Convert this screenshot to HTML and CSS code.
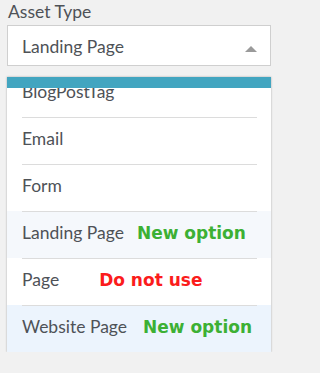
FILE: index.html
```html
<!DOCTYPE html>
<html>
<head>
<meta charset="utf-8">
<link rel="stylesheet" href="styles.css">
</head>
<body>
<div class="field">
  <div class="label">Asset Type</div>
  <div class="select">
    <span class="value">Landing Page</span>
    <svg class="caret" width="12" height="6" viewBox="0 0 12 6"><path d="M0 6 L6 0 L12 6 Z" fill="#9a9a9a"/></svg>
  </div>
  <div class="menu">
    <div class="menu-bar"></div>
    <div class="menu-list">
      <div class="list-inner">
        <div class="row first"><div class="row-in">BlogPostTag</div></div>
        <div class="row"><div class="row-in">Email</div></div>
        <div class="row"><div class="row-in">Form</div></div>
        <div class="row hover"><div class="row-in">Landing Page<span class="tag new gap-a">New option</span></div></div>
        <div class="row"><div class="row-in">Page<span class="tag bad gap-b">Do not use</span></div></div>
        <div class="row selected"><div class="row-in">Website Page<span class="tag new gap-c">New option</span></div></div>
      </div>
    </div>
  </div>
</div>
</body>
</html>
```

FILE: styles.css
```css
html, body {
  margin: 0;
  padding: 0;
  background: #f1f1f1;
}
body {
  font-family: "Lato", "Liberation Sans", sans-serif;
  color: #4e5257;
  font-size: 17.5px;
  line-height: 22px;
}
.field {
  padding: 1px 0 0 7px;
  width: 264px;
}
.label {
  padding-left: 1px;
  height: 22px;
}
.select {
  margin-top: 2px;
  box-sizing: border-box;
  height: 41px;
  background: #fff;
  border: 1px solid #cfcfcf;
  display: flex;
  align-items: flex-start;
  padding: 10px 13px 0 14px;
}
.caret {
  margin-left: auto;
  margin-top: 10px;
}
.menu {
  margin-top: 11px;
  background: #fff;
  box-shadow: 0 0 2px rgba(0,0,0,0.3);
}
.menu-bar {
  height: 11px;
  background: #42a5c0;
}
.menu-list {
  height: 264px;
  overflow: hidden;
}
.list-inner {
  margin-top: -18px;
}
.row {
  padding: 0 14px 0 15px;
  height: 47px;
  box-sizing: border-box;
}
.row-in {
  height: 47px;
  box-sizing: border-box;
  border-top: 1px solid #dcdcdc;
  padding-top: 10px;
  white-space: nowrap;
}
.row.first .row-in {
  border-top-color: transparent;
}
.row.hover {
  background: #f5f8fc;
}
.row.selected {
  background: #ecf4fd;
}
.tag {
  font-family: "DejaVu Sans", sans-serif;
  font-weight: bold;
  font-size: 17px;
}
.tag.new { color: #3cb034; }
.tag.bad { color: #fb1c1c; }
.gap-a { margin-left: 13px; }
.gap-b { margin-left: 40px; }
.gap-c { margin-left: 16px; }
```
